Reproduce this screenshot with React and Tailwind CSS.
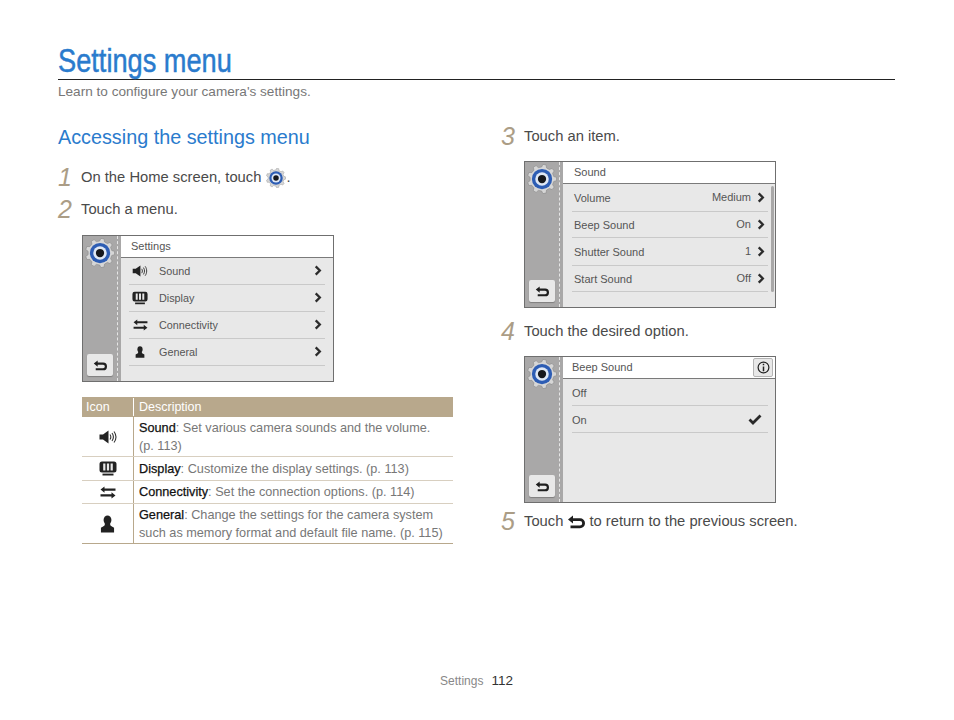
const FONT = "font-['Liberation_Sans',sans-serif]"

function gearPoints(teeth, outer, inner) {
  const pts = []
  const step = (Math.PI * 2) / teeth
  for (let i = 0; i < teeth; i++) {
    const a = i * step
    const corners = [
      [a - step * 0.3, inner],
      [a - step * 0.16, outer],
      [a + step * 0.16, outer],
      [a + step * 0.3, inner],
    ]
    corners.forEach(([ang, r]) => {
      pts.push(`${(20 + r * Math.cos(ang)).toFixed(2)},${(20 + r * Math.sin(ang)).toFixed(2)}`)
    })
  }
  return pts.join(' ')
}

function Gear({ className }) {
  return (
    <svg viewBox="0 0 40 40" className={className}>
      <polygon points={gearPoints(9, 19.5, 16)} fill="#d6d6d6" stroke="#8a8a8a" strokeWidth="0.8" />
      <circle cx="20" cy="20" r="13.5" fill="#2d5db4" />
      <circle cx="20" cy="20" r="9" fill="#dfe8f5" />
      <circle cx="20" cy="20" r="5.5" fill="#16181d" />
    </svg>
  )
}

function Chevron({ className = 'h-[12px] w-[8px]' }) {
  return (
    <svg viewBox="0 0 8 12" className={className}>
      <path d="M1.5 1.5 6 6l-4.5 4.5" fill="none" stroke="#2c2c2c" strokeWidth="2.5" />
    </svg>
  )
}

function BackArrow({ className }) {
  return (
    <svg viewBox="0 0 18 14" className={className}>
      <path d="M6 0.5 1 4.5 6 8.5V6h7a2.2 2.2 0 0 1 0 4.4H3.5v2.8H13a5 5 0 0 0 0-10H6Z" fill="#1f1f1f" />
    </svg>
  )
}

function SoundIcon({ className }) {
  return (
    <svg viewBox="0 0 18 14" className={className}>
      <path d="M0.5 4.5h3.5L9.5 0.5v13L4 9.5H0.5Z" fill="#222" />
      <path d="M11 4.5c1 1.5 1 3.5 0 5M13 3c1.7 2.4 1.7 5.6 0 8M15 1.5c2.4 3.3 2.4 7.7 0 11" fill="none" stroke="#333" strokeWidth="1.1" />
    </svg>
  )
}

function DisplayIcon({ className }) {
  return (
    <svg viewBox="0 0 18 15" className={className}>
      <path d="M3 0.5h12a2.5 2.5 0 0 1 2.5 2.5v6A2.5 2.5 0 0 1 15 11.5H3A2.5 2.5 0 0 1 0.5 9V3A2.5 2.5 0 0 1 3 0.5Z" fill="#222" />
      <path d="M4.2 2.5h2.2v7H4.2ZM7.9 2.5h2.2v7H7.9ZM11.6 2.5h2.2v7h-2.2Z" fill="#e8e8e8" />
      <path d="M3.5 12.6h11v1.9h-11Z" fill="#222" />
    </svg>
  )
}

function ConnectIcon({ className }) {
  return (
    <svg viewBox="0 0 16 13" className={className}>
      <path d="M4.5 0.5v2h11v2.2h-11v2L0.5 3.6Z" fill="#222" />
      <path d="M11.5 6.3v2H0.5v2.2h11v2l4-3.1Z" fill="#222" />
    </svg>
  )
}

function PersonIcon({ className }) {
  return (
    <svg viewBox="0 0 14 17" className={className}>
      <ellipse cx="7" cy="4.8" rx="3.7" ry="4.4" fill="#222" />
      <path d="M4.6 8.5h4.8l0.6 1.6 3.2 2V16.5H0.8v-4.4l3.2-2Z" fill="#222" />
    </svg>
  )
}

function Step({ n, className = '', children }) {
  return (
    <div className={`flex h-[24px] items-center ${className}`}>
      <span className="w-[23px] text-[25px] leading-none text-[#ab9d86] italic">{n}</span>
      <span className="pt-[1px] text-[14.75px] text-[#4a4a4a]">{children}</span>
    </div>
  )
}

function Screen({ title, titleClass = 'pl-[10px]', action, children }) {
  return (
    <div className="flex h-[147px] w-[252px] border border-[#6f6f6f]">
      <div className="relative flex w-[38px] shrink-0 flex-col items-center justify-between bg-[#a9a8a8] pr-[4px] pb-[5px]">
        <Gear className="mt-[2px] h-[30px] w-[30px]" />
        <div className="flex h-[22px] w-[26px] items-center justify-center rounded-[2px] bg-[#e8e8e8] shadow-[0_1px_1px_rgba(0,0,0,0.25)]">
          <BackArrow className="h-[11px] w-[14px]" />
        </div>
        <div className="absolute inset-y-0 right-[3px] border-r border-dashed border-[#e6e6e6]" />
      </div>
      <div className="flex min-w-0 flex-1 flex-col bg-[#e8e8e8]">
        <div className={`flex h-[22px] shrink-0 items-center justify-between border-b border-[#7a7a7a] bg-white text-[11px] text-[#555] ${titleClass}`}>
          <span>{title}</span>
          {action}
        </div>
        {children}
      </div>
    </div>
  )
}

const MENU = [
  { label: 'Sound', Icon: SoundIcon, size: 'h-[12px] w-[16px]' },
  { label: 'Display', Icon: DisplayIcon, size: 'h-[14px] w-[16px]' },
  { label: 'Connectivity', Icon: ConnectIcon, size: 'h-[12px] w-[15px]' },
  { label: 'General', Icon: PersonIcon, size: 'h-[12px] w-[10px]' },
]

const SOUND_ROWS = [
  { label: 'Volume', value: 'Medium', h: 'h-[28px]' },
  { label: 'Beep Sound', value: 'On', h: 'h-[26px]' },
  { label: 'Shutter Sound', value: '1', h: 'h-[28px]' },
  { label: 'Start Sound', value: 'Off', h: 'h-[26px]' },
]

const TABLE = [
  { Icon: SoundIcon, size: 'h-[14px] w-[18px]', name: 'Sound', text: ': Set various camera sounds and the volume.', extra: '(p. 113)', h: 'h-[40px]' },
  { Icon: DisplayIcon, size: 'h-[15px] w-[18px]', name: 'Display', text: ': Customize the display settings. (p. 113)', h: 'h-[24px]' },
  { Icon: ConnectIcon, size: 'h-[13px] w-[16px]', name: 'Connectivity', text: ': Set the connection options. (p. 114)', h: 'h-[23px]' },
  { Icon: PersonIcon, size: 'h-[18px] w-[15px]', name: 'General', text: ': Change the settings for the camera system', extra: 'such as memory format and default file name. (p. 115)', h: 'h-[39px]' },
]

export default function App() {
  return (
    <div className={`flex h-[720px] w-[954px] flex-col overflow-hidden bg-white pr-[59px] pl-[58px] ${FONT}`}>
      <h1 className="flex h-[80px] items-end border-b border-[#222] text-[34px] leading-[37px] text-[#2a7bcd]">
        <span className="origin-left scale-x-[0.8] whitespace-nowrap [-webkit-text-stroke:0.5px_#2a7bcd]">Settings menu</span>
      </h1>
      <p className="flex h-[24px] items-center text-[13.6px] text-[#777]">
        Learn to configure your camera's settings.
      </p>

      <div className="flex">
        <div className="w-[395px]">
          <h2 className="mt-[21px] flex h-[26px] items-center text-[19.8px] text-[#2a7bcd]">
            Accessing the settings menu
          </h2>
          <Step n="1" className="mt-[14px]">
            <span className="flex items-center">
              On the Home screen, touch
              <Gear className="mr-[0px] ml-[5px] h-[20px] w-[20px]" />
              .
            </span>
          </Step>
          <Step n="2" className="mt-[8px]">Touch a menu.</Step>

          <div className="mt-[14px] ml-[24px]">
            <Screen title="Settings">
              <div className="flex flex-col px-[8px]">
                {MENU.map(({ label, Icon, size }) => (
                  <div key={label} className="flex h-[27px] items-center border-b border-[#c9c9c9] text-[10.8px] text-[#555]">
                    <span className="flex w-[22px] justify-center"><Icon className={size} /></span>
                    <span className="ml-[8px] flex-1 pt-[1px]">{label}</span>
                    <Chevron className="mr-[3px] mb-[1px] h-[11px] w-[8px]" />
                  </div>
                ))}
              </div>
            </Screen>
          </div>

          <div className="mt-[15px] ml-[24px] w-[371px] border-b border-[#b8a88c]">
            <div className="flex h-[20px] items-center bg-[#b8a88c] text-[12.5px] text-white">
              <span className="w-[52px] border-r border-white pl-[4px]">Icon</span>
              <span className="pl-[5px]">Description</span>
            </div>
            {TABLE.map(({ Icon, size, name, text, extra, h }, i) => (
              <div key={name} className={`flex ${h} ${i < 3 ? 'border-b border-[#d8cfc0]' : ''}`}>
                <div className="flex w-[52px] shrink-0 items-center justify-center border-r border-[#b8a88c]">
                  <Icon className={size} />
                </div>
                <div className="flex flex-col justify-center pl-[5px] text-[12.7px] leading-[18px] whitespace-nowrap text-[#777]">
                  <div><span className="text-[#111] [-webkit-text-stroke:0.25px_#111]">{name}</span>{text}</div>
                  {extra && <div>{extra}</div>}
                </div>
              </div>
            ))}
          </div>
        </div>

        <div className="ml-[48px] w-[300px]">
          <Step n="3" className="mt-[20px]">Touch an item.</Step>
          <div className="mt-[13px] ml-[23px]">
            <Screen title="Sound" titleClass="pl-[11px]">
              <div className="relative flex flex-col pr-[7px] pl-[9px]">
                {SOUND_ROWS.map((r) => (
                  <div key={r.label} className={`flex ${r.h} items-center justify-between border-b border-[#c9c9c9] pl-[2px] text-[11px] text-[#555]`}>
                    <span className="pt-[2px]">{r.label}</span>
                    <span className="flex items-center gap-[6px]">
                      {r.value}
                      <Chevron className="mr-[3px] h-[11px] w-[8px]" />
                    </span>
                  </div>
                ))}
                <div className="absolute top-[2px] right-[1px] h-[106px] w-[3px] rounded-full bg-[#a9a8a8]" />
              </div>
            </Screen>
          </div>

          <Step n="4" className="mt-[11px]">Touch the desired option.</Step>
          <div className="mt-[13px] ml-[23px]">
            <Screen
              title="Beep Sound"
              titleClass="pl-[9px]"
              action={
                <span className="mr-[2px] flex h-[19px] w-[20px] items-center justify-center rounded-[2px] border border-[#b5b5b5] bg-[#e8e8e8]">
                  <svg viewBox="0 0 14 14" className="h-[13px] w-[13px]">
                    <circle cx="7" cy="7" r="5.8" fill="none" stroke="#222" strokeWidth="1.3" />
                    <path d="M6.2 3h1.6v1.6H6.2ZM6.2 5.8h1.6V11H6.2Z" fill="#222" />
                  </svg>
                </span>
              }
            >
              <div className="flex flex-col pr-[7px] pl-[9px]">
                <div className="flex h-[27px] items-center border-b border-[#c9c9c9] pt-[2px] text-[11px] text-[#555]">Off</div>
                <div className="flex h-[27px] items-center justify-between border-b border-[#c9c9c9] text-[11px] text-[#555]">
                  <span className="pt-[2px]">On</span>
                  <svg viewBox="0 0 14 11" className="mr-[6px] h-[11px] w-[14px]">
                    <path d="M1.5 5.5 5 9l7.5-7.5" fill="none" stroke="#2a2a2a" strokeWidth="2.8" />
                  </svg>
                </div>
              </div>
            </Screen>
          </div>
          <Step n="5" className="mt-[6px]">
            <span className="flex items-center whitespace-nowrap">
              Touch
              <BackArrow className="mx-[4px] h-[14px] w-[18px]" />
              to return to the previous screen.
            </span>
          </Step>
        </div>
      </div>

      <div className="mt-auto mb-[29px] flex items-center justify-center gap-[8px]">
        <span className="text-[12px] text-[#888]">Settings</span>
        <span className="text-[13.5px] text-[#333]">112</span>
      </div>
    </div>
  )
}
